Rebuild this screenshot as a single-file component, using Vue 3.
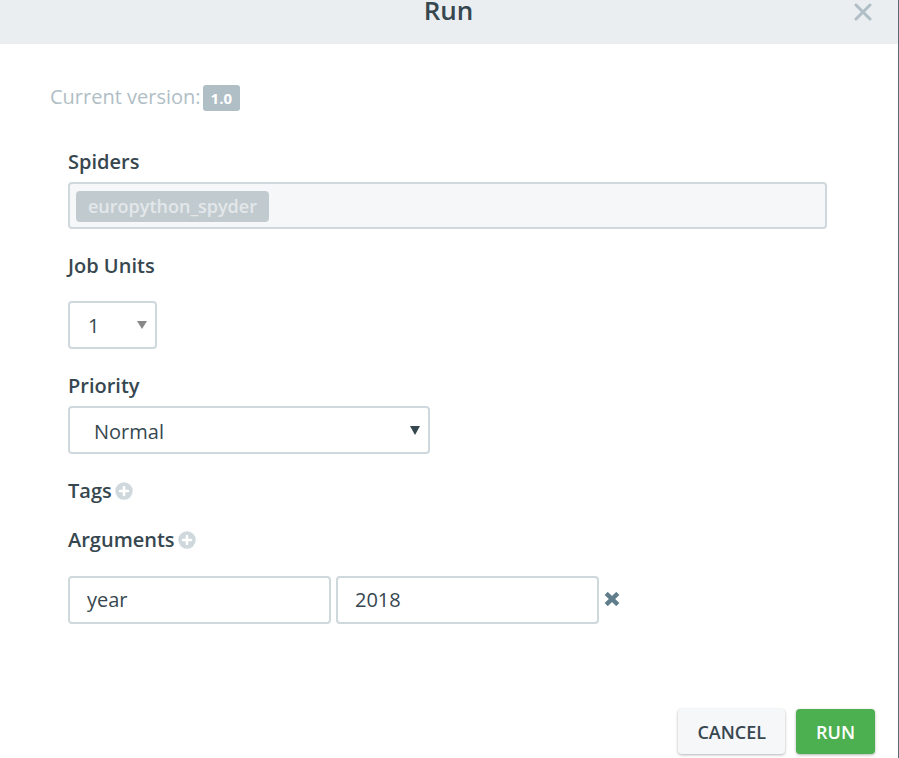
<script setup>
import { ref } from 'vue'

const units = ref('1')
const priority = ref('Normal')
const args = ref([{ name: 'year', value: '2018' }])

const addArgument = () => args.value.push({ name: '', value: '' })
const removeArgument = (index) => args.value.splice(index, 1)
</script>

<template>
  <form class="dialog" role="dialog" aria-labelledby="dialog-title" @submit.prevent>
    <header class="header">
      <h1 id="dialog-title" class="title">Run</h1>
      <button class="icon-button close" type="button" aria-label="Close">
        <svg width="18" height="18" viewBox="0 0 18 18" fill="none" stroke="#b0bec5" stroke-width="3" stroke-linecap="round">
          <path d="M2 2L16 16M16 2L2 16" />
        </svg>
      </button>
    </header>

    <p class="version">Current version: <span class="badge">1.0</span></p>

    <main class="fields">
      <section class="field">
        <h2 class="label">Spiders</h2>
        <div class="spiders"><span class="chip">europython_spyder</span></div>
      </section>

      <section class="field spaced">
        <label class="label" for="units">Job Units</label>
        <div class="select-box units">
          <select id="units" v-model="units">
            <option>1</option>
            <option>2</option>
          </select>
          <svg class="arrow" width="10" height="8" viewBox="0 0 10 8"><path d="M0 0H10L5 8Z" fill="#888" /></svg>
        </div>
      </section>

      <section class="field">
        <label class="label" for="priority">Priority</label>
        <div class="select-box priority">
          <select id="priority" v-model="priority">
            <option>Normal</option>
            <option>High</option>
          </select>
          <svg class="arrow" width="10" height="9" viewBox="0 0 10 9"><path d="M0 0H10L5 9Z" fill="#37474f" /></svg>
        </div>
      </section>

      <section class="heading">
        <h2 class="label">Tags</h2>
        <button class="icon-button" type="button" aria-label="Add tag">
          <svg width="18" height="18" viewBox="0 0 18 18">
            <circle cx="9" cy="9" r="8.7" fill="#cfd8dc" />
            <path d="M9 5V13M5 9H13" stroke="#fff" stroke-width="2.6" stroke-linecap="round" />
          </svg>
        </button>
      </section>

      <section class="field arguments">
        <div class="heading">
          <h2 class="label">Arguments</h2>
          <button class="icon-button" type="button" aria-label="Add argument" @click="addArgument">
            <svg width="18" height="18" viewBox="0 0 18 18">
              <circle cx="9" cy="9" r="8.7" fill="#cfd8dc" />
              <path d="M9 5V13M5 9H13" stroke="#fff" stroke-width="2.6" stroke-linecap="round" />
            </svg>
          </button>
        </div>
        <div v-for="(arg, index) in args" :key="index" class="argument">
          <input v-model="arg.name" type="text" aria-label="Argument name" />
          <input v-model="arg.value" type="text" aria-label="Argument value" />
          <button class="icon-button remove" type="button" aria-label="Remove argument" @click="removeArgument(index)">
            <svg width="16" height="14" viewBox="0 0 16 14" fill="none" stroke="#607d8b" stroke-width="4.4">
              <path d="M2.2 1.4L13.8 12.6M13.8 1.4L2.2 12.6" />
            </svg>
          </button>
        </div>
      </section>
    </main>

    <footer class="footer">
      <button class="button cancel" type="button">CANCEL</button>
      <button class="button run" type="submit">RUN</button>
    </footer>
  </form>
</template>

<style>
body {
  background: #fff;
  overflow: hidden;
}
</style>

<style scoped>
.dialog {
  box-sizing: border-box;
  min-height: 100vh;
  border-right: 1px solid #596b78;
  color: #37474f;
  font: 400 20px/28px "Open Sans", "Noto Sans", sans-serif;
}

button,
select,
input {
  box-sizing: border-box;
  margin: 0;
  color: inherit;
  font: inherit;
}

.header {
  display: grid;
  grid-template-columns: 1fr auto 1fr;
  height: 44px;
  padding: 0 26px 0 25px;
  background: #eaeef1;
}

.title {
  grid-column: 2;
  margin: 0;
  font-size: 26px;
  font-weight: 600;
  line-height: 20px;
}

.icon-button {
  display: flex;
  padding: 0;
  border: 0;
  background: none;
  cursor: pointer;
}

.close {
  justify-self: end;
  align-self: start;
  padding-top: 3px;
}

.version {
  display: flex;
  align-items: flex-end;
  gap: 2px;
  margin: 39px 50px 37px;
  color: #b0bec5;
}

.badge {
  padding: 0 8px;
  border-radius: 3px;
  background: #b0bec5;
  color: #fff;
  font-size: 15px;
  font-weight: 700;
  line-height: 26px;
}

.fields {
  display: flex;
  flex-direction: column;
  gap: 23px;
  padding: 0 71px 0 68px;
}

.field {
  display: flex;
  flex-direction: column;
  gap: 6px;
}

.spaced {
  gap: 21px;
}

.arguments {
  gap: 24px;
}

.label {
  margin: 0;
  font-size: 20px;
  font-weight: 600;
}

.spiders {
  display: flex;
  padding: 7px 6px 5px;
  border: 2px solid #cfd8dc;
  border-radius: 4px;
  background: #f5f7f9;
}

.chip {
  padding: 0 12px;
  border-radius: 4px;
  background: #c1cbcf;
  color: #e3e7ea;
  font-size: 18px;
  font-weight: 600;
  line-height: 31px;
}

.select-box {
  display: grid;
  align-items: center;
}

.select-box > * {
  grid-area: 1 / 1;
}

.select-box select {
  width: 100%;
  height: 48px;
  border: 2px solid #cfd8dc;
  border-radius: 4px;
  background: #fff;
  appearance: none;
}

.arrow {
  justify-self: end;
  margin-right: 10px;
  pointer-events: none;
}

.units {
  width: 89px;
}

.units select {
  padding: 2px 18px 0;
}

.priority {
  width: 362px;
}

.priority select {
  padding: 4px 24px 0;
}

.heading {
  display: flex;
  align-items: center;
  gap: 3px;
  padding-top: 2px;
  line-height: 24px;
}

.argument {
  display: flex;
  align-items: center;
  gap: 5px;
}

.argument input {
  width: 263px;
  height: 48px;
  padding: 0 17px 2px;
  border: 2px solid #cfd8dc;
  border-radius: 4px;
  background: #fff;
}

.remove {
  padding-bottom: 2px;
}

.footer {
  display: flex;
  justify-content: flex-end;
  gap: 11px;
  padding: 85px 23px 0;
}

.button {
  padding: 2px 19px 0;
  border: 0;
  border-radius: 4px;
  font-size: 18px;
  font-weight: 600;
  line-height: 43px;
  box-shadow: 0 1px 3px rgba(0, 0, 0, 0.3);
}

.cancel {
  background: #f5f7f9;
}

.run {
  padding: 2px 20px 0;
  background: #4caf50;
  color: #fff;
}
</style>
